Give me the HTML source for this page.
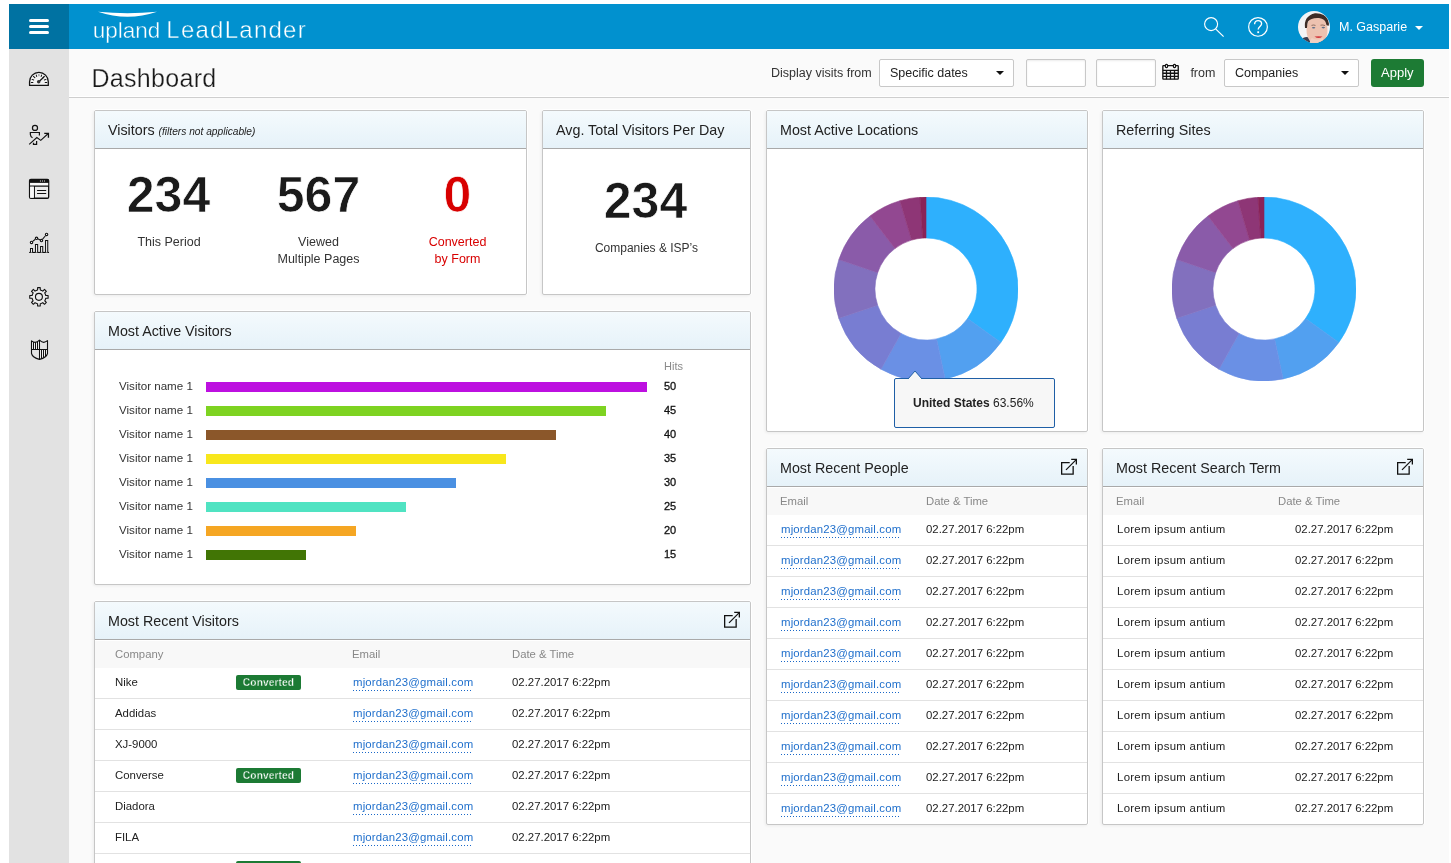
<!DOCTYPE html>
<html><head><meta charset="utf-8">
<style>
*{box-sizing:border-box;margin:0;padding:0}
html,body{width:1451px;height:863px;overflow:hidden;background:#fff;font-family:"Liberation Sans",sans-serif;color:#333}
.abs{position:absolute}
body>div{will-change:transform}
#top{position:absolute;left:9px;top:4px;width:1440px;height:45px;background:#0191cf}
#burger{position:absolute;left:0;top:0;width:60px;height:45px;background:#0072a2}
#burger i{position:absolute;left:20px;width:20px;height:3px;border-radius:2px;background:#fff}
#side{position:absolute;left:9px;top:49px;width:60px;height:814px;background:#e2e2e2}
#main{position:absolute;left:69px;top:49px;width:1380px;height:814px;background:#fafafa}
.t{position:absolute;white-space:nowrap;line-height:1}
.card{position:absolute;background:#fff;border:1px solid #c6c6c6;border-radius:2px;overflow:hidden;box-shadow:0 -1px 0 #fff,1px 0 0 #fff,-1px 1px 3px rgba(0,0,0,.06)}
.ch{position:absolute;left:0;top:0;right:0;height:38px;background:linear-gradient(#f4fafd,#e6f2f9);border-bottom:1px solid #a9a9a9}
.ch .tt{position:absolute;left:13px;top:12px;font-size:14.3px;color:#222;white-space:nowrap;line-height:1}
.thd{position:absolute;left:0;right:0;top:38px;height:28px;background:#f8f8f8;border-top:1px solid #fff}
.th{position:absolute;top:7.5px;font-size:11.3px;color:#888;line-height:1;white-space:nowrap}
.row{position:absolute;left:0;right:0;height:31px;border-bottom:1px solid #e2e2e2}
.row .c{position:absolute;top:9px;font-size:11.4px;color:#222;line-height:1;white-space:nowrap}
.lnk{letter-spacing:.16px;color:#1f6fcc !important;background:linear-gradient(to right,#1a68c8 1px,transparent 1px) repeat-x 0 100%/3px 1px;padding-bottom:3px}
.badge{position:absolute;left:141px;top:7px;width:65px;height:15px;background:#1c7a34;border-radius:2px;color:#fff;font-size:10.2px;font-weight:bold;text-align:center;line-height:15px;letter-spacing:0.1px;-webkit-text-stroke:0.3px #1c7a34}
.sel{position:absolute;top:10px;height:28px;background:#fff;border:1px solid #c8c8c8;border-radius:2px}
.sel span{position:absolute;left:10px;top:6.6px;font-size:12.5px;color:#222;line-height:1;white-space:nowrap}
.sel b{position:absolute;right:9.5px;top:10.6px;width:0;height:0;border-left:4.5px solid transparent;border-right:4.5px solid transparent;border-top:4.5px solid #111}
.inp{position:absolute;top:10px;width:60px;height:28px;background:#fff;border:1px solid #c8c8c8;border-radius:2px;box-shadow:inset 0 1px 2px rgba(0,0,0,.08)}
.bar{position:absolute;left:111px;height:10px}
.lbl{position:absolute;left:24px;margin-top:-2px;font-size:11.6px;color:#333;line-height:1;white-space:nowrap}
.val{position:absolute;left:569px;margin-top:-1px;font-size:11px;color:#111;-webkit-text-stroke:0.3px #111;line-height:1}
.ext{position:absolute;right:8.5px;top:8px;width:20px;height:20px}
</style></head><body>
<div id="top">
  <div id="burger"><i style="top:15px"></i><i style="top:21px"></i><i style="top:27px"></i></div>
  <svg class="abs" style="left:88.5px;top:7px" width="59" height="8" viewBox="0 0 58 8" preserveAspectRatio="none"><path d="M0 0.8 Q29 3.6 58 0.8 Q29 10.8 0 0.8Z" fill="#fff"/></svg>
  <div class="t" style="left:83.8px;top:16.3px;font-size:22.5px;color:#fff;-webkit-text-stroke:0.4px #0191cf">upland</div>
  <div class="t" style="left:157.3px;top:14px;font-size:24px;color:#fff;letter-spacing:1.25px;-webkit-text-stroke:0.4px #0191cf">LeadLander</div>
  <svg class="abs" style="left:1194px;top:12px" width="22" height="22" viewBox="0 0 22 22"><circle cx="8.1" cy="8.1" r="6.5" fill="none" stroke="#fff" stroke-width="1.15"/><path d="M12.6 12.9 L20.6 20.6" stroke="#fff" stroke-width="1.2"/></svg>
  <svg class="abs" style="left:1238px;top:12px" width="22" height="22" viewBox="0 0 22 22"><circle cx="11" cy="10.9" r="9.35" fill="none" stroke="#fff" stroke-width="1.2"/><path d="M7.6 8.3 C7.6 5.8 9.3 4.6 11.1 4.6 C13 4.6 14.6 5.9 14.6 7.8 C14.6 10.4 11.2 10.6 11.2 13.4" fill="none" stroke="#fff" stroke-width="1.4"/><rect x="10.3" y="15.3" width="1.8" height="1.8" fill="#fff"/></svg>
  <svg class="abs" style="left:1289px;top:7px" width="32" height="32" viewBox="0 0 32 32">
    <defs><clipPath id="av"><circle cx="16" cy="16" r="16"/></clipPath></defs>
    <g clip-path="url(#av)">
      <rect width="32" height="32" fill="#f3f3f5"/>
      <path d="M3 32 L5 27 Q9 25 12 27 L12 32Z M20 32 L26 26 Q30 27 31 30 L31 32Z" fill="#3a3f52"/>
      <ellipse cx="19" cy="19" rx="10.5" ry="15" fill="#edc2b0"/>
      <path d="M19 32 L12 32 Q12 28 14 27 Q19 30 25 27 Q26 29 25 32Z" fill="#f1d0c2"/>
      <path d="M7 17 Q5.5 5 17 2.2 Q27 1.8 30 9 Q31.5 13 30.5 15 L28.5 14 Q27.5 7.5 21 7 Q13 6.5 10 10.5 Q9 13 9 17 Z" fill="#3e2c26"/>
      <path d="M13.5 14.4 Q15.5 13.6 17.5 14.4 M22.5 14.2 Q25 13.6 27 14.6" stroke="#6a4a40" stroke-width="0.7" fill="none"/>
      <ellipse cx="15.6" cy="16.7" rx="1.7" ry="0.8" fill="#5d6e88"/>
      <ellipse cx="25.3" cy="16.6" rx="1.7" ry="0.8" fill="#5d6e88"/>
      <path d="M16.5 25.6 Q20.5 24.8 24.5 25.6 Q20.5 28.6 16.5 25.6Z" fill="#d33a3e"/>
    </g>
  </svg>
  <div class="t" style="left:1330px;top:16.5px;font-size:12.5px;color:#fff">M. Gasparie</div>
  <b class="abs" style="left:1406px;top:21.5px;width:0;height:0;border-left:4.5px solid transparent;border-right:4.5px solid transparent;border-top:4.5px solid #fff"></b>
</div>
<div id="side">
<svg class="abs" style="left:10px;top:11px" width="40" height="40" viewBox="0 0 863 863"><g fill="none" stroke="#111" stroke-linecap="round">
<path d="M228 548 V470 A202 202 0 0 1 632 470 V548 Z" fill="#f3f3f3" stroke-width="28" stroke-linejoin="round"/>
<path d="M265 485 H300 M565 485 H600 M282 418 L318 430 M582 418 L546 430 M312 352 L342 380 M548 352 L518 380 M372 325 L382 355 M488 325 L478 355" stroke-width="22"/>
<path d="M430 312 V338" stroke="#777" stroke-width="22"/>
<path d="M428 468 L532 372" stroke-width="26"/></g>
<circle cx="425" cy="470" r="38" fill="#333"/></svg>
<svg class="abs" style="left:10px;top:66px" width="40" height="40" viewBox="0 0 863 863"><g fill="none" stroke="#111" stroke-width="26">
<circle cx="345" cy="278" r="55"/>
<path d="M440 440 V378 H245 V420 Q250 470 292 490"/>
<path d="M380 560 V632 H312 V600"/>
<path d="M220 635 L385 485 L470 548 L625 405" stroke-width="24"/>
<path d="M545 398 H635 V490" stroke-width="28"/></g></svg>
<svg class="abs" style="left:10px;top:121px" width="40" height="40" viewBox="0 0 863 863"><g fill="none" stroke="#111">
<rect x="228" y="205" width="412" height="405" rx="28" fill="#ececec" stroke-width="28"/>
<rect x="228" y="200" width="412" height="78" rx="20" fill="#111" stroke="none"/>
<rect x="240" y="278" width="390" height="66" fill="#fafafa" stroke="none"/>
<path d="M228 348 H640 M332 348 V610" stroke-width="24"/>
<rect x="240" y="360" width="80" height="240" fill="#f8f8f8" stroke="none"/>
<path d="M398 442 H578 M398 506 H578" stroke-width="22" stroke-linecap="round"/></g>
<g fill="#ccc"><ellipse cx="462" cy="238" rx="11" ry="18"/><ellipse cx="507" cy="238" rx="11" ry="18"/><ellipse cx="550" cy="238" rx="11" ry="18"/></g></svg>
<svg class="abs" style="left:10px;top:173px" width="40" height="40" viewBox="0 0 863 863"><g fill="none" stroke="#111">
<path d="M220 657 H648" stroke-width="24"/>
<path d="M248 657 V572 H292 V657 M355 657 V487 H402 V657 M465 657 V530 H512 V657 M573 657 V398 H620 V657" stroke-width="22" fill="#f2f2f2"/>
<path d="M290 422 L352 372 M402 362 L460 388 M505 375 L575 292" stroke-width="22"/>
<g stroke-width="24" fill="#f2f2f2"><circle cx="270" cy="440" r="26"/><circle cx="378" cy="352" r="26"/><circle cx="485" cy="400" r="26"/><circle cx="595" cy="268" r="26"/></g></g></svg>
<svg class="abs" style="left:10px;top:227px" width="40" height="40" viewBox="0 0 863 863"><g fill="none" stroke="#111" stroke-width="24" stroke-linejoin="round">
<path d="M387 306 L401 303 L402 252 L458 252 L459 303 L473 306 L502 318 L514 326 L550 290 L590 330 L554 366 L562 378 L574 407 L577 421 L628 422 L628 478 L577 479 L574 493 L562 522 L554 534 L590 570 L550 610 L514 574 L502 582 L473 594 L459 597 L458 648 L402 648 L401 597 L387 594 L358 582 L346 574 L310 610 L270 570 L306 534 L298 522 L286 493 L283 479 L232 478 L232 422 L283 421 L286 407 L298 378 L306 366 L270 330 L310 290 L346 326 L358 318Z" fill="#ececec"/>
<circle cx="430" cy="450" r="75"/></g></svg>
<svg class="abs" style="left:20px;top:290px" width="20" height="22" viewBox="0 0 20 22"><defs><clipPath id="shc"><path d="M2.5 1.8 Q6.5 5.2 10.5 1.2 Q14.5 5.2 18.5 1.7 V14.5 Q17.5 18.6 10.5 20.4 Q3.5 18.6 2.5 14.5 Z"/></clipPath></defs>
<path d="M2.5 1.8 Q6.5 5.2 10.5 1.2 Q14.5 5.2 18.5 1.7 V14.5 Q17.5 18.6 10.5 20.4 Q3.5 18.6 2.5 14.5 Z" fill="#f2f2f2"/>
<g clip-path="url(#shc)" stroke="#111" stroke-width="1"><path d="M4.5 0 V10.5 M6.5 0 V10.5 M8.5 0 V10.5 M12.5 10.5 V22 M14.5 10.5 V22 M16.5 10.5 V22"/><rect x="11" y="3.9" width="7" height="6" fill="#e4e4e4" stroke="none"/><rect x="3" y="11" width="7" height="8" fill="#e4e4e4" stroke="none"/></g>
<g fill="none" stroke="#111"><path d="M2.5 1.8 Q6.5 5.2 10.5 1.2 Q14.5 5.2 18.5 1.7 V14.5 Q17.5 18.6 10.5 20.4 Q3.5 18.6 2.5 14.5 Z" stroke-width="1.1" stroke-linejoin="round"/><path d="M2.5 10.5 H18.5 M10.5 1.2 V20.4" stroke-width="1.05"/></g></svg>
</div>
<div id="main"><div class="t" style="left:22.5px;top:17.4px;font-size:25px;letter-spacing:0.3px;color:#1a1a1a;-webkit-text-stroke:0.25px #fafafa">Dashboard</div>
<div class="t" style="left:702px;top:18.4px;font-size:12.5px;color:#333">Display visits from</div>
<div class="sel" style="left:810px;width:135px"><span>Specific dates</span><b></b></div>
<div class="inp" style="left:957px"></div><div class="inp" style="left:1027px"></div>
<svg class="abs" style="left:1091px;top:13px" width="20" height="20" viewBox="0 0 20 20"><g fill="none" stroke="#111" stroke-width="1.3"><rect x="2.85" y="3.65" width="15.4" height="13.55" rx="0.5"/><path d="M2.85 8.35 H18.25 M2.85 11.25 H18.25 M2.85 14.3 H18.25 M6.5 8.35 V17.2 M10.45 8.35 V17.2 M14.5 8.35 V17.2"/></g><g fill="#fff" stroke="#111" stroke-width="1.2"><rect x="5.4" y="2.4" width="2.2" height="3.2" rx="1"/><rect x="13.4" y="2.4" width="2.2" height="3.2" rx="1"/></g></svg>
<div class="t" style="left:1121.4px;top:18.4px;font-size:12.5px;color:#333">from</div>
<div class="sel" style="left:1155px;width:135px"><span>Companies</span><b></b></div>
<div class="abs" style="left:1302px;top:10px;width:53px;height:28px;background:#1d7b34;border-radius:3px"><div class="t" style="left:10px;top:7.2px;font-size:13px;color:#fff">Apply</div></div>
<div class="abs" style="left:0;top:48px;width:1380px;height:1px;background:#cecece;box-shadow:0 -1px 0 #fff"></div>
<div class="card" style="left:25px;top:61px;width:433px;height:185px"><div class="ch"><div class="tt">Visitors <i style="font-size:10.2px">(filters not applicable)</i></div></div><div class="t" style="left:-26.5px;width:200px;text-align:center;top:59px;font-size:50px;font-weight:bold;-webkit-text-stroke:0.7px #fff;color:#1a1a1a">234</div><div class="t" style="left:-26px;width:200px;text-align:center;top:125px;font-size:12.5px;color:#333">This Period</div><div class="t" style="left:123.5px;width:200px;text-align:center;top:59px;font-size:50px;font-weight:bold;-webkit-text-stroke:0.7px #fff;color:#1a1a1a">567</div><div class="t" style="left:123.5px;top:123px;width:200px;text-align:center;font-size:12.5px;line-height:17px;color:#333;white-space:normal">Viewed<br>Multiple Pages</div><div class="t" style="left:262.5px;width:200px;text-align:center;top:59px;font-size:50px;font-weight:bold;-webkit-text-stroke:0.7px #fff;color:#d80000">0</div><div class="t" style="left:262.5px;top:123px;width:200px;text-align:center;font-size:12.5px;line-height:17px;color:#d80000;white-space:normal">Converted<br>by Form</div></div>
<div class="card" style="left:473px;top:61px;width:209px;height:185px"><div class="ch"><div class="tt">Avg. Total Visitors Per Day</div></div><div class="t" style="left:2.5px;width:200px;text-align:center;top:65px;font-size:50px;font-weight:bold;-webkit-text-stroke:0.7px #fff;color:#1a1a1a">234</div><div class="t" style="left:3.5px;width:200px;text-align:center;top:131px;font-size:12px;color:#333">Companies &amp; ISP’s</div></div>
<div class="card" style="left:25px;top:262px;width:657px;height:274px"><div class="ch"><div class="tt">Most Active Visitors</div></div><div class="t" style="left:569px;top:49px;font-size:11px;color:#8a8a8a">Hits</div><div class="lbl" style="top:70px">Visitor name 1</div><div class="bar" style="top:70px;width:441px;background:#bd10e0"></div><div class="val" style="top:70px">50</div><div class="lbl" style="top:94px">Visitor name 1</div><div class="bar" style="top:94px;width:400px;background:#7ed321"></div><div class="val" style="top:94px">45</div><div class="lbl" style="top:118px">Visitor name 1</div><div class="bar" style="top:118px;width:350px;background:#8b572a"></div><div class="val" style="top:118px">40</div><div class="lbl" style="top:142px">Visitor name 1</div><div class="bar" style="top:142px;width:300px;background:#f8e71c"></div><div class="val" style="top:142px">35</div><div class="lbl" style="top:166px">Visitor name 1</div><div class="bar" style="top:166px;width:250px;background:#4a90e2"></div><div class="val" style="top:166px">30</div><div class="lbl" style="top:190px">Visitor name 1</div><div class="bar" style="top:190px;width:200px;background:#50e3c2"></div><div class="val" style="top:190px">25</div><div class="lbl" style="top:214px">Visitor name 1</div><div class="bar" style="top:214px;width:150px;background:#f5a623"></div><div class="val" style="top:214px">20</div><div class="lbl" style="top:238px">Visitor name 1</div><div class="bar" style="top:238px;width:100px;background:#417505"></div><div class="val" style="top:238px">15</div></div>
<div class="card" style="left:25px;top:552px;width:657px;height:400px"><div class="ch"><div class="tt">Most Recent Visitors</div><svg class="ext" viewBox="0 0 20 20"><g fill="none" stroke="#111"><path d="M10.7 5.65 H2.65 V17.15 H14.15 V8.9" stroke-width="1.3"/><path d="M7 12.8 L17 2.8" stroke-width="1.2"/><path d="M12.2 2.45 H17.35 V7.6" stroke-width="1.3"/></g></svg></div><div class="thd"><div class="th" style="left:20px">Company</div><div class="th" style="left:257px">Email</div><div class="th" style="left:417px">Date &amp; Time</div></div><div class="row" style="top:66px"><div class="c" style="left:20px">Nike</div><div class="badge">Converted</div><div class="c lnk" style="left:258px">mjordan23@gmail.com</div><div class="c" style="left:417px">02.27.2017 6:22pm</div></div><div class="row" style="top:97px"><div class="c" style="left:20px">Addidas</div><div class="c lnk" style="left:258px">mjordan23@gmail.com</div><div class="c" style="left:417px">02.27.2017 6:22pm</div></div><div class="row" style="top:128px"><div class="c" style="left:20px">XJ-9000</div><div class="c lnk" style="left:258px">mjordan23@gmail.com</div><div class="c" style="left:417px">02.27.2017 6:22pm</div></div><div class="row" style="top:159px"><div class="c" style="left:20px">Converse</div><div class="badge">Converted</div><div class="c lnk" style="left:258px">mjordan23@gmail.com</div><div class="c" style="left:417px">02.27.2017 6:22pm</div></div><div class="row" style="top:190px"><div class="c" style="left:20px">Diadora</div><div class="c lnk" style="left:258px">mjordan23@gmail.com</div><div class="c" style="left:417px">02.27.2017 6:22pm</div></div><div class="row" style="top:221px"><div class="c" style="left:20px">FILA</div><div class="c lnk" style="left:258px">mjordan23@gmail.com</div><div class="c" style="left:417px">02.27.2017 6:22pm</div></div><div class="row" style="top:252px"><div class="c" style="left:20px">Puma</div><div class="badge">Converted</div><div class="c lnk" style="left:258px">mjordan23@gmail.com</div><div class="c" style="left:417px">02.27.2017 6:22pm</div></div></div>
<div class="card" style="left:697px;top:61px;width:322px;height:322px"><div class="ch"><div class="tt">Most Active Locations</div></div><svg class="abs" style="left:67px;top:86px" width="184" height="184" viewBox="0 0 184 184"><path fill="#2eb0fd" stroke="#2eb0fd" stroke-width="0.6" d="M92.00 0.00A92 92 0 0 1 166.90 145.42L133.52 121.62A51 51 0 0 0 92.00 41.00Z"/><path fill="#52a0f0" stroke="#52a0f0" stroke-width="0.6" d="M166.90 145.42A92 92 0 0 1 111.13 181.99L102.60 141.89A51 51 0 0 0 133.52 121.62Z"/><path fill="#6a90e5" stroke="#6a90e5" stroke-width="0.6" d="M111.13 181.99A92 92 0 0 1 46.98 172.23L67.04 136.48A51 51 0 0 0 102.60 141.89Z"/><path fill="#787dd2" stroke="#787dd2" stroke-width="0.6" d="M46.98 172.23A92 92 0 0 1 4.75 121.19L43.64 108.18A51 51 0 0 0 67.04 136.48Z"/><path fill="#8270be" stroke="#8270be" stroke-width="0.6" d="M4.75 121.19A92 92 0 0 1 4.86 62.50L43.69 75.65A51 51 0 0 0 43.64 108.18Z"/><path fill="#8a5ba9" stroke="#8a5ba9" stroke-width="0.6" d="M4.86 62.50A92 92 0 0 1 35.99 19.01L60.95 51.54A51 51 0 0 0 43.69 75.65Z"/><path fill="#924891" stroke="#924891" stroke-width="0.6" d="M35.99 19.01A92 92 0 0 1 66.02 3.74L77.60 43.07A51 51 0 0 0 60.95 51.54Z"/><path fill="#8e3676" stroke="#8e3676" stroke-width="0.6" d="M66.02 3.74A92 92 0 0 1 86.06 0.19L88.71 41.11A51 51 0 0 0 77.60 43.07Z"/><path fill="#8a2358" stroke="#8a2358" stroke-width="0.6" d="M86.06 0.19A92 92 0 0 1 92.00 0.00L92.00 41.00A51 51 0 0 0 88.71 41.11Z"/>
</svg><div class="abs" style="left:127px;top:267px;width:161px;height:50px;background:#f7f7f7;border:1px solid #1f5fa6;border-radius:2px"><div class="t" style="left:18px;top:18px;font-size:12px;color:#222"><b>United States</b> 63.56%</div></div><svg class="abs" style="left:141px;top:259px" width="14" height="9" viewBox="0 0 14 9"><path d="M0 9 L7 1 L14 9" fill="#f7f7f7" stroke="#1f5fa6" stroke-width="1"/></svg></div>
<div class="card" style="left:1033px;top:61px;width:322px;height:322px"><div class="ch"><div class="tt">Referring Sites</div></div><svg class="abs" style="left:69px;top:86px" width="184" height="184" viewBox="0 0 184 184"><path fill="#2eb0fd" stroke="#2eb0fd" stroke-width="0.6" d="M92.00 0.00A92 92 0 0 1 166.90 145.42L133.52 121.62A51 51 0 0 0 92.00 41.00Z"/><path fill="#52a0f0" stroke="#52a0f0" stroke-width="0.6" d="M166.90 145.42A92 92 0 0 1 111.13 181.99L102.60 141.89A51 51 0 0 0 133.52 121.62Z"/><path fill="#6a90e5" stroke="#6a90e5" stroke-width="0.6" d="M111.13 181.99A92 92 0 0 1 46.98 172.23L67.04 136.48A51 51 0 0 0 102.60 141.89Z"/><path fill="#787dd2" stroke="#787dd2" stroke-width="0.6" d="M46.98 172.23A92 92 0 0 1 4.75 121.19L43.64 108.18A51 51 0 0 0 67.04 136.48Z"/><path fill="#8270be" stroke="#8270be" stroke-width="0.6" d="M4.75 121.19A92 92 0 0 1 4.86 62.50L43.69 75.65A51 51 0 0 0 43.64 108.18Z"/><path fill="#8a5ba9" stroke="#8a5ba9" stroke-width="0.6" d="M4.86 62.50A92 92 0 0 1 35.99 19.01L60.95 51.54A51 51 0 0 0 43.69 75.65Z"/><path fill="#924891" stroke="#924891" stroke-width="0.6" d="M35.99 19.01A92 92 0 0 1 66.02 3.74L77.60 43.07A51 51 0 0 0 60.95 51.54Z"/><path fill="#8e3676" stroke="#8e3676" stroke-width="0.6" d="M66.02 3.74A92 92 0 0 1 86.06 0.19L88.71 41.11A51 51 0 0 0 77.60 43.07Z"/><path fill="#8a2358" stroke="#8a2358" stroke-width="0.6" d="M86.06 0.19A92 92 0 0 1 92.00 0.00L92.00 41.00A51 51 0 0 0 88.71 41.11Z"/>
</svg></div>
<div class="card" style="left:697px;top:399px;width:322px;height:377px"><div class="ch"><div class="tt">Most Recent People</div><svg class="ext" viewBox="0 0 20 20"><g fill="none" stroke="#111"><path d="M10.7 5.65 H2.65 V17.15 H14.15 V8.9" stroke-width="1.3"/><path d="M7 12.8 L17 2.8" stroke-width="1.2"/><path d="M12.2 2.45 H17.35 V7.6" stroke-width="1.3"/></g></svg></div><div class="thd"><div class="th" style="left:13px">Email</div><div class="th" style="left:159px">Date &amp; Time</div></div><div class="row" style="top:66px"><div class="c lnk" style="left:14px">mjordan23@gmail.com</div><div class="c" style="left:159px">02.27.2017 6:22pm</div></div><div class="row" style="top:97px"><div class="c lnk" style="left:14px">mjordan23@gmail.com</div><div class="c" style="left:159px">02.27.2017 6:22pm</div></div><div class="row" style="top:128px"><div class="c lnk" style="left:14px">mjordan23@gmail.com</div><div class="c" style="left:159px">02.27.2017 6:22pm</div></div><div class="row" style="top:159px"><div class="c lnk" style="left:14px">mjordan23@gmail.com</div><div class="c" style="left:159px">02.27.2017 6:22pm</div></div><div class="row" style="top:190px"><div class="c lnk" style="left:14px">mjordan23@gmail.com</div><div class="c" style="left:159px">02.27.2017 6:22pm</div></div><div class="row" style="top:221px"><div class="c lnk" style="left:14px">mjordan23@gmail.com</div><div class="c" style="left:159px">02.27.2017 6:22pm</div></div><div class="row" style="top:252px"><div class="c lnk" style="left:14px">mjordan23@gmail.com</div><div class="c" style="left:159px">02.27.2017 6:22pm</div></div><div class="row" style="top:283px"><div class="c lnk" style="left:14px">mjordan23@gmail.com</div><div class="c" style="left:159px">02.27.2017 6:22pm</div></div><div class="row" style="top:314px"><div class="c lnk" style="left:14px">mjordan23@gmail.com</div><div class="c" style="left:159px">02.27.2017 6:22pm</div></div><div class="row" style="top:345px"><div class="c lnk" style="left:14px">mjordan23@gmail.com</div><div class="c" style="left:159px">02.27.2017 6:22pm</div></div></div>
<div class="card" style="left:1033px;top:399px;width:322px;height:377px"><div class="ch"><div class="tt">Most Recent Search Term</div><svg class="ext" viewBox="0 0 20 20"><g fill="none" stroke="#111"><path d="M10.7 5.65 H2.65 V17.15 H14.15 V8.9" stroke-width="1.3"/><path d="M7 12.8 L17 2.8" stroke-width="1.2"/><path d="M12.2 2.45 H17.35 V7.6" stroke-width="1.3"/></g></svg></div><div class="thd"><div class="th" style="left:13px">Email</div><div class="th" style="left:175px">Date &amp; Time</div></div><div class="row" style="top:66px"><div class="c" style="left:14px;letter-spacing:.3px">Lorem ipsum antium</div><div class="c" style="left:192px">02.27.2017 6:22pm</div></div><div class="row" style="top:97px"><div class="c" style="left:14px;letter-spacing:.3px">Lorem ipsum antium</div><div class="c" style="left:192px">02.27.2017 6:22pm</div></div><div class="row" style="top:128px"><div class="c" style="left:14px;letter-spacing:.3px">Lorem ipsum antium</div><div class="c" style="left:192px">02.27.2017 6:22pm</div></div><div class="row" style="top:159px"><div class="c" style="left:14px;letter-spacing:.3px">Lorem ipsum antium</div><div class="c" style="left:192px">02.27.2017 6:22pm</div></div><div class="row" style="top:190px"><div class="c" style="left:14px;letter-spacing:.3px">Lorem ipsum antium</div><div class="c" style="left:192px">02.27.2017 6:22pm</div></div><div class="row" style="top:221px"><div class="c" style="left:14px;letter-spacing:.3px">Lorem ipsum antium</div><div class="c" style="left:192px">02.27.2017 6:22pm</div></div><div class="row" style="top:252px"><div class="c" style="left:14px;letter-spacing:.3px">Lorem ipsum antium</div><div class="c" style="left:192px">02.27.2017 6:22pm</div></div><div class="row" style="top:283px"><div class="c" style="left:14px;letter-spacing:.3px">Lorem ipsum antium</div><div class="c" style="left:192px">02.27.2017 6:22pm</div></div><div class="row" style="top:314px"><div class="c" style="left:14px;letter-spacing:.3px">Lorem ipsum antium</div><div class="c" style="left:192px">02.27.2017 6:22pm</div></div><div class="row" style="top:345px"><div class="c" style="left:14px;letter-spacing:.3px">Lorem ipsum antium</div><div class="c" style="left:192px">02.27.2017 6:22pm</div></div></div></div>
</body></html>
